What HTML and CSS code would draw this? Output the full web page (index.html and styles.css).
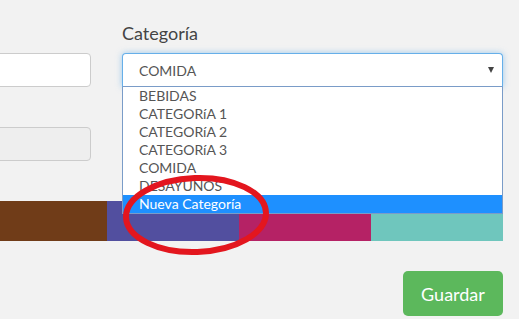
FILE: index.html
```html
<!DOCTYPE html>
<html lang="es">
<head>
    <meta charset="UTF-8">
    <meta name="viewport" content="width=device-width, initial-scale=1.0">
    <title>Producto</title>
    <link rel="stylesheet" href="styles.css">
</head>
<body>

    <div class="form">
        <div class="row">
            <div class="col">
                <label class="label">&nbsp;</label>
                <input type="text" class="field">
                <input type="text" class="field spaced" disabled>
            </div>

            <div class="col">
                <label class="label">Categoría</label>
                <div class="select">
                    <div class="select-box">
                        <span>COMIDA</span>
                        <span class="arrow"></span>
                    </div>
                    <ul class="options">
                        <li>BEBIDAS</li>
                        <li>CATEGORíA 1</li>
                        <li>CATEGORíA 2</li>
                        <li>CATEGORíA 3</li>
                        <li>COMIDA</li>
                        <li>DESAYUNOS</li>
                        <li class="active">Nueva Categoría</li>
                    </ul>
                </div>
            </div>
        </div>

        <div class="colors">
            <div class="swatch brown"></div>
            <div class="swatch purple"></div>
            <div class="swatch magenta"></div>
            <div class="swatch teal"></div>
        </div>

        <div class="actions">
            <button class="btn-save">Guardar</button>
        </div>
    </div>

    <!-- mark drawn over the screenshot -->
    <svg class="mark" width="170" height="100" viewBox="0 0 170 100">
        <ellipse cx="81" cy="45" rx="70" ry="37" fill="none" stroke="#e3161e" stroke-width="6" transform="rotate(-2 81 45)"/>
    </svg>

</body>
</html>
```

FILE: styles.css
```css
body {
    font-family: Lato, "Open Sans", sans-serif;
    background-color: #f2f2f2;
    margin: 0;
    padding: 22px 0 0 0;
    overflow: hidden;
    position: relative;
}
.form {
    margin-left: -25px;
    margin-right: 16px;
}
.row {
    display: grid;
    grid-template-columns: minmax(0, 1fr) 381px;
    column-gap: 31px;
}
.col {
    display: flex;
    flex-direction: column;
    min-width: 0;
}
.label {
    display: block;
    font-size: 18px;
    line-height: 22px;
    color: #444;
    margin-bottom: 9px;
}
.field {
    box-sizing: border-box;
    width: 100%;
    height: 34px;
    border: 1px solid #ccc;
    border-radius: 4px;
    background: #fff;
    margin: 0;
}
.field.spaced {
    margin-top: 40px;
}
.field:disabled {
    background: #eee;
}
.select {
    position: relative;
}
.select-box {
    box-sizing: border-box;
    height: 34px;
    display: flex;
    align-items: center;
    justify-content: space-between;
    padding: 0 8px 0 16px;
    background: #fff;
    border: 1px solid #66afe9;
    border-bottom-color: #7a9cc8;
    border-radius: 4px 4px 0 0;
    box-shadow: 0 0 6px rgba(102, 175, 233, 0.6);
    font-size: 14px;
    color: #555;
}
.arrow {
    width: 0;
    height: 0;
    border-left: 3.5px solid transparent;
    border-right: 3.5px solid transparent;
    border-top: 6px solid #444;
}
.options {
    position: absolute;
    top: 34px;
    left: 0;
    right: 0;
    margin: 0;
    padding: 0;
    list-style: none;
    background: #fff;
    border: 1px solid #7a9cc8;
    border-top: none;
    z-index: 2;
}
.options li {
    height: 18px;
    line-height: 18px;
    padding-left: 16px;
    font-size: 14px;
    color: #555;
}
.options li.active {
    background: #1e90ff;
    color: #fff;
}
.colors {
    display: flex;
    height: 40px;
    margin-top: 40px;
}
.swatch {
    flex: 1;
}
.brown { background: #703c18; }
.purple { background: #524f9f; }
.magenta { background: #b52265; }
.teal { background: #6fc6bd; }
.actions {
    display: flex;
    justify-content: flex-end;
    margin-top: 30px;
}
.btn-save {
    width: 100px;
    height: 45px;
    border: none;
    border-radius: 5px;
    background: #5cb85c;
    color: #fff;
    font-family: Lato, sans-serif;
    font-size: 18px;
    cursor: pointer;
}
.mark {
    position: absolute;
    left: 115px;
    top: 170px;
    z-index: 3;
}
```
